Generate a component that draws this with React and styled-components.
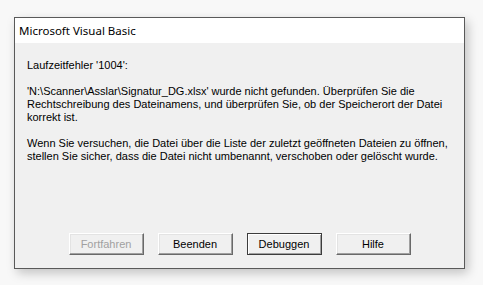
import styled, { createGlobalStyle } from "styled-components";

const GlobalStyle = createGlobalStyle`
    html, body {
        margin: 0;
        padding: 0;
        background: #f8f8f8;
    }
`;

export default function App() {
    const buttons = [
        { label: "Fortfahren", disabled: true },
        { label: "Beenden" },
        { label: "Debuggen", isDefault: true },
        { label: "Hilfe" },
    ];

    return (
        <Page>
            <GlobalStyle />
            <Window>
                <TitleBar>Microsoft Visual Basic</TitleBar>
                <Body>
                    <Message>Laufzeitfehler '1004':</Message>
                    <Message>
                        'N:\Scanner\Asslar\Signatur_DG.xlsx' wurde nicht gefunden. Überprüfen Sie die
                        <br />Rechtschreibung des Dateinamens, und überprüfen Sie, ob der Speicherort der Datei
                        <br />korrekt ist.
                    </Message>
                    <Message>
                        Wenn Sie versuchen, die Datei über die Liste der zuletzt geöffneten Dateien zu öffnen,
                        <br />stellen Sie sicher, dass die Datei nicht umbenannt, verschoben oder gelöscht wurde.
                    </Message>
                    <ButtonRow>
                        {buttons.map(b => (
                            <DialogButton key={b.label} disabled={b.disabled} $isDefault={b.isDefault}>
                                {b.label}
                            </DialogButton>
                        ))}
                    </ButtonRow>
                </Body>
            </Window>
        </Page>
    )
}

const Page = styled.div`
    width: 483px;
    height: 285px;
    padding: 17px 0 0 14px;
    box-sizing: border-box;
    font-family: "Liberation Sans", Arial, sans-serif;
`;

const Window = styled.div`
    width: 451px;
    height: 252px;
    box-sizing: border-box;
    border: 1px solid #595959;
    display: flex;
    flex-direction: column;
    box-shadow: 3px 4px 10px rgba(0, 0, 0, 0.22);
`;

const TitleBar = styled.div`
    height: 25px;
    background: #ffffff;
    padding-left: 4px;
    display: flex;
    align-items: center;
    font-family: "Noto Sans", "Open Sans", sans-serif;
    font-size: 11.5px;
    color: #000;
`;

const Body = styled.div`
    flex: 1;
    background: #f0f0f0;
    padding: 16px 12px 13px 12px;
    display: flex;
    flex-direction: column;
    gap: 13px;
`;

const Message = styled.p`
    margin: 0;
    font-size: 11px;
    line-height: 13px;
    color: #000;
    white-space: nowrap;
`;

const ButtonRow = styled.div`
    margin-top: auto;
    display: flex;
    justify-content: center;
    gap: 14px;
`;

const DialogButton = styled.button`
    width: 75px;
    height: 22px;
    padding: 0;
    background: #f0f0f0;
    font-family: inherit;
    font-size: 11px;
    color: ${({disabled}) => disabled ? "#a0a0a0" : "#000"};
    border: 1px solid;
    border-color: ${({$isDefault}) => $isDefault ? "#3c3c3c" : "#ffffff #696969 #696969 #ffffff"};
    box-shadow: ${({$isDefault}) => $isDefault
        ? "inset 1px 1px #ffffff, inset -1px -1px #a0a0a0"
        : "inset -1px -1px #a0a0a0, inset 1px 1px #e3e3e3"};
    border-radius: 0;
`;
